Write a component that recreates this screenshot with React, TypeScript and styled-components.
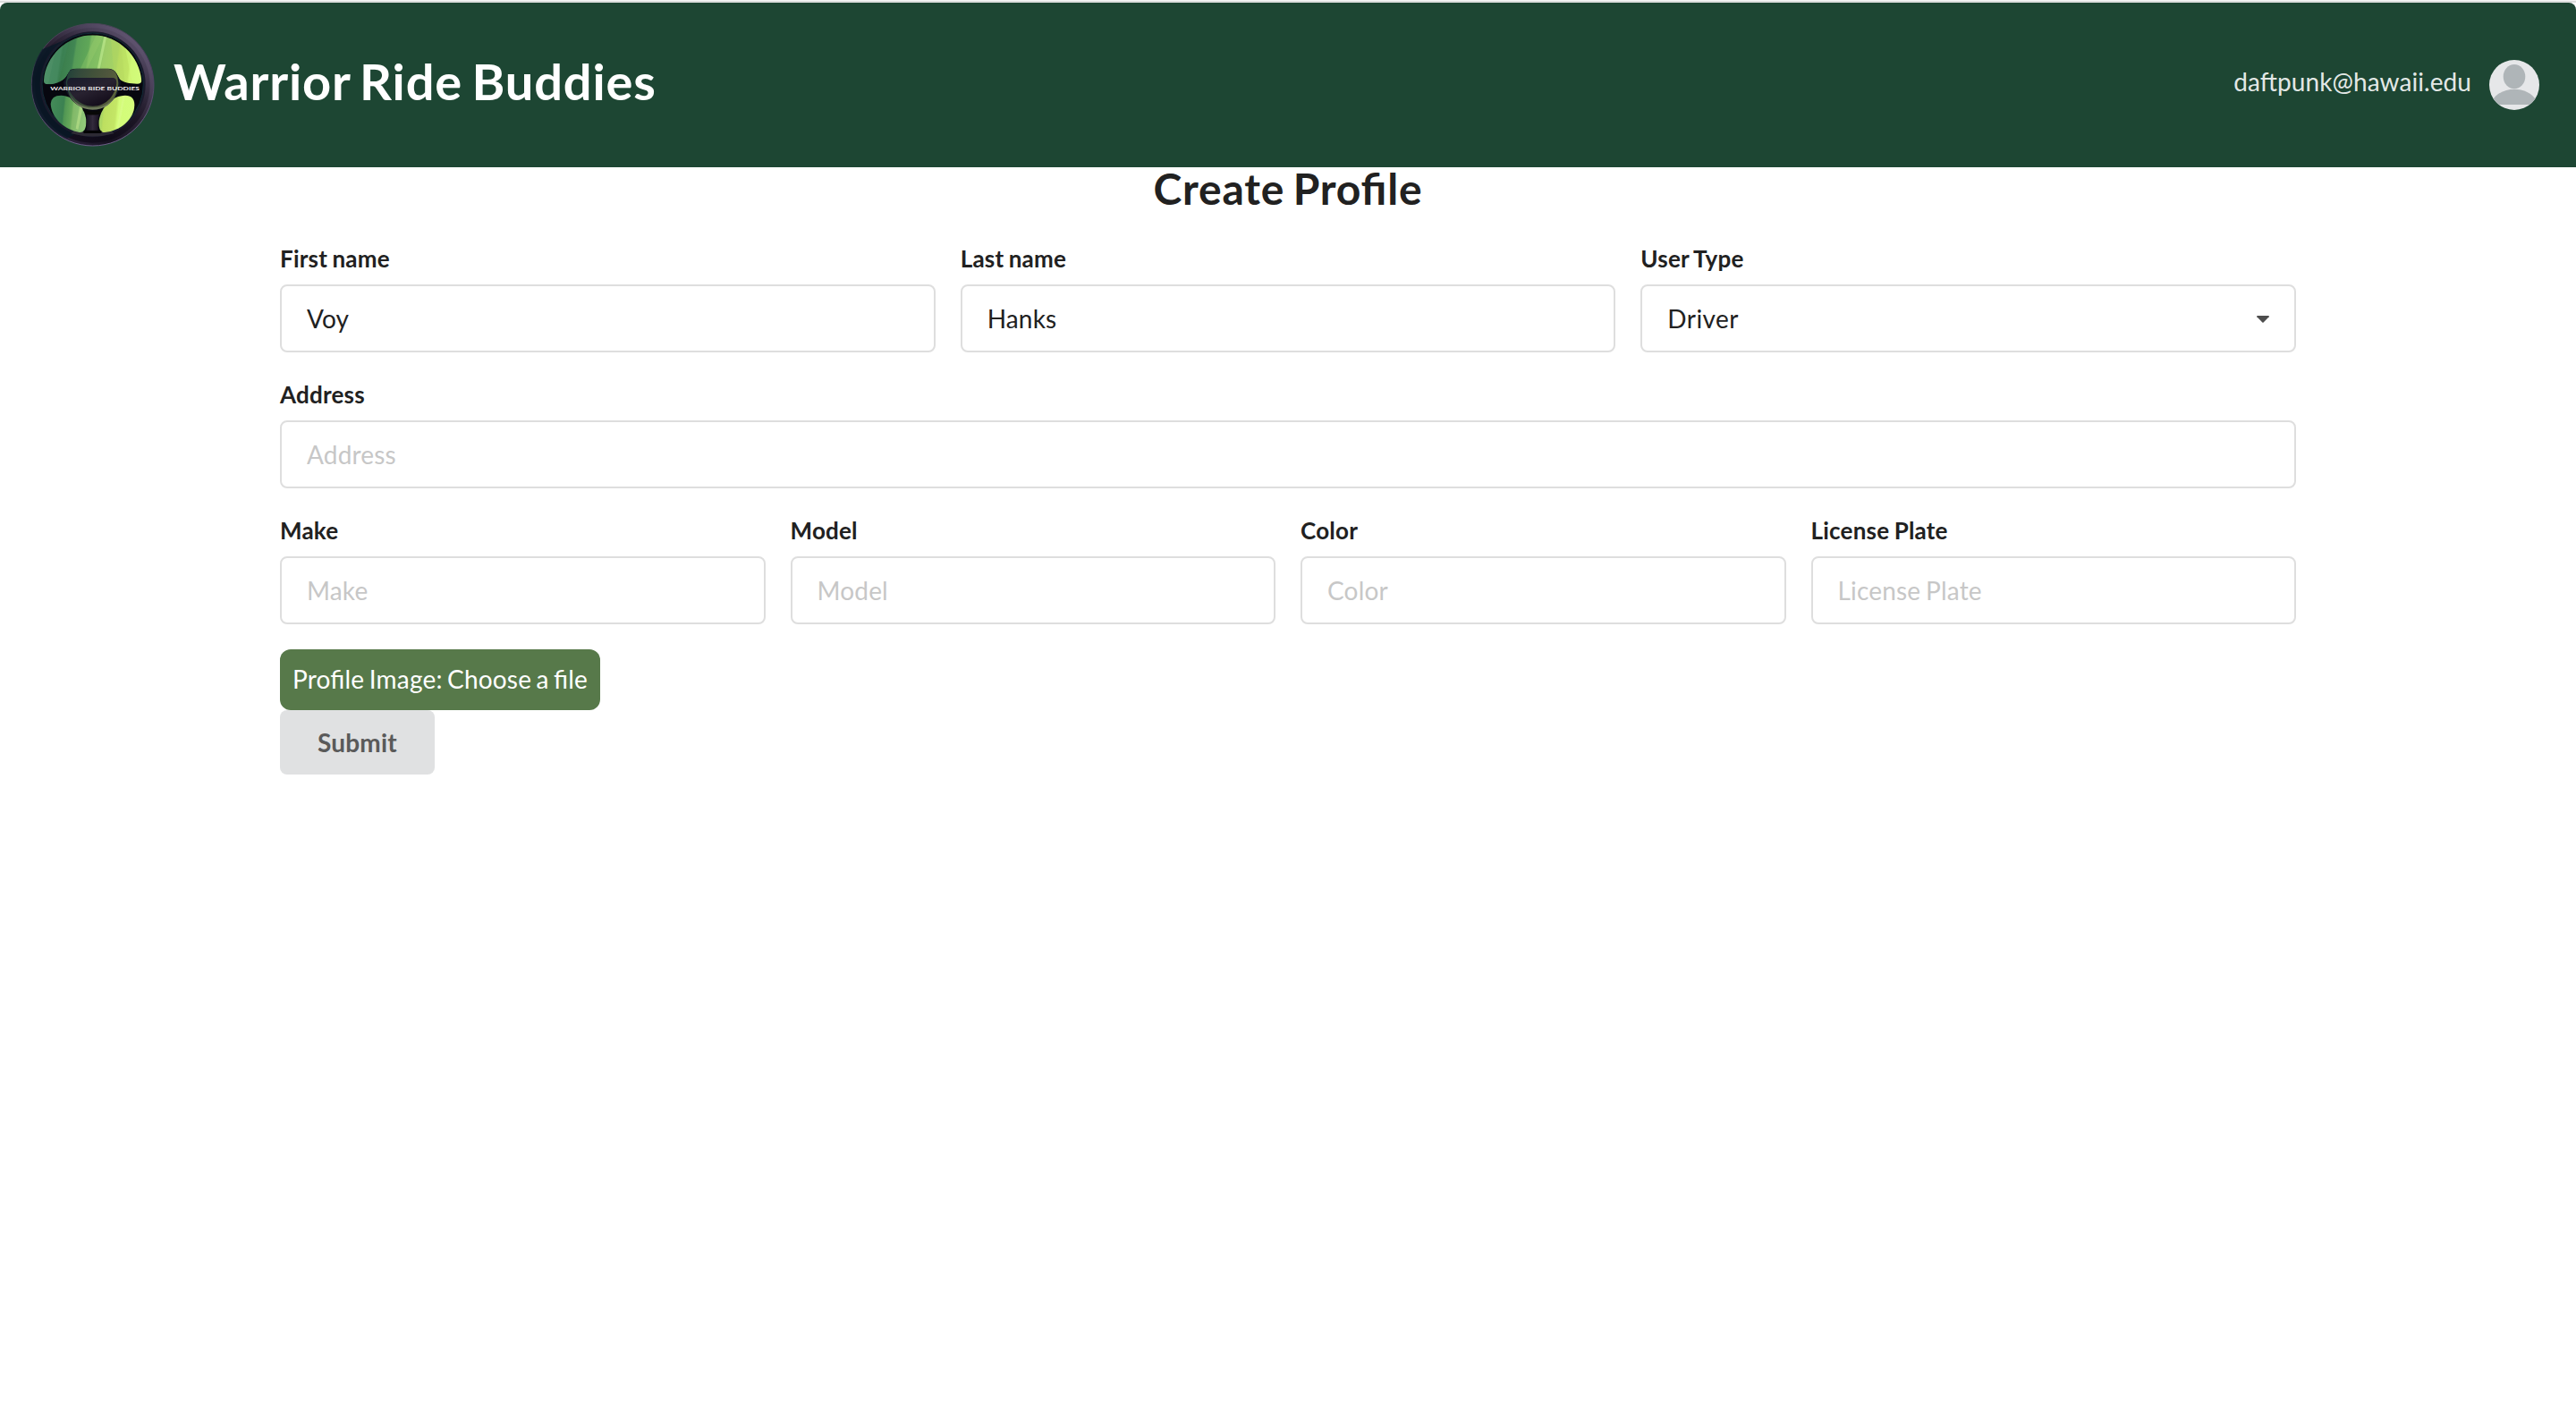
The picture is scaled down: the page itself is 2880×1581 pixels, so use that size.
import React from 'react';
import styled, { createGlobalStyle } from 'styled-components';

const GlobalStyle = createGlobalStyle`
  *, *::before, *::after { box-sizing: border-box; }
  html { font-size: 28px; }
  body {
    margin: 0;
    background: #fff;
    color: #212121;
    font-family: Lato, 'Liberation Sans', sans-serif;
    font-size: 28px;
    line-height: 40px;
    letter-spacing: 0.17px;
    word-spacing: -1.5px;
    font-feature-settings: 'liga' 1;
  }
`;

const Page = styled.div`
  min-height: 1581px;
  border-top: 1px solid #f5f5f5;
`;

const TopRule = styled.div`
  height: 2px;
  background: #dcdedd;
`;

const NavBar = styled.header`
  display: flex;
  align-items: center;
  justify-content: space-between;
  height: 184px;
  padding: 0 41px 0 20px;
  background: #1d4633;
  border-radius: 8px 8px 0 0;
`;

const Brand = styled.div`
  display: flex;
  align-items: center;
  gap: 3px;
`;

const BrandName = styled.h1`
  margin: 0 0 9px;
  color: #fff;
  font-size: 56px;
  font-weight: 700;
  line-height: 72px;
  letter-spacing: 0.85px;
  word-spacing: -4px;
`;

const Account = styled.div`
  display: flex;
  align-items: center;
  gap: 20px;
`;

const Email = styled.span`
  margin-bottom: 8px;
  color: rgba(255, 255, 255, 0.9);
  letter-spacing: 0.07px;
`;

const Container = styled.main`
  width: 2254px;
  margin: 0 auto;
`;

const PageTitle = styled.h2`
  margin: -7px 0 28px;
  font-size: 48px;
  font-weight: 700;
  line-height: 62px;
  letter-spacing: 0.8px;
  word-spacing: -3px;
  text-align: center;
`;

const Form = styled.form`
  display: flex;
  flex-direction: column;
  align-items: flex-start;
`;

const FieldRow = styled.div<{ $columns: number }>`
  display: grid;
  grid-template-columns: repeat(${p => p.$columns}, 1fr);
  gap: 28px;
  width: 100%;
  margin-bottom: 28px;
`;

const Field = styled.div`
  display: flex;
  flex-direction: column;
  gap: 10px;
  min-width: 0;
`;

const Label = styled.label`
  font-size: 26px;
  font-weight: 700;
  line-height: 38px;
  letter-spacing: 0.22px;
  word-spacing: -1.2px;
`;

const Input = styled.input`
  width: 100%;
  height: 76px;
  padding: 19px 28px;
  border: 2px solid #dedede;
  border-radius: 8px;
  background: #fff;
  color: #212121;
  font: inherit;
  font-feature-settings: inherit;
  letter-spacing: inherit;
  word-spacing: inherit;
  line-height: 34px;
  outline: none;

  &::placeholder {
    color: #c7c7c7;
    opacity: 1;
  }
`;

const Dropdown = styled.div`
  display: flex;
  align-items: center;
  justify-content: space-between;
  height: 76px;
  padding: 0 28px;
  border: 2px solid #dedede;
  border-radius: 8px;
  background: #fff;
  line-height: 34px;
  letter-spacing: 0.45px;

  svg {
    margin-top: 2px;
  }
`;

const UploadButton = styled.label`
  padding: 13px 14px 15px;
  border-radius: 12px;
  background: #57794a;
  color: #fff;
  line-height: 40px;
  letter-spacing: 0.2px;
  word-spacing: -2px;
`;

const SubmitButton = styled.button`
  height: 72px;
  padding: 0 42px;
  border: 0;
  border-radius: 8px;
  background: #e0e1e2;
  color: #5a5a5a;
  font: inherit;
  font-weight: 700;
  line-height: 28px;
  letter-spacing: inherit;
`;

const Caret = () => (
  <svg width="14" height="8" viewBox="0 0 14 8">
    <path d="M0.3 0H13.7V1.2L7.6 7.6Q7 8.1 6.4 7.6L0.3 1.2z" fill="#4d4d4d" />
  </svg>
);

const Avatar = () => (
  <svg width="56" height="56" viewBox="0 0 56 56">
    <defs>
      <clipPath id="avatarClip">
        <circle cx="28" cy="28" r="28" />
      </clipPath>
    </defs>
    <g clipPath="url(#avatarClip)">
      <rect width="56" height="56" fill="#e6e7e9" />
      <ellipse cx="28" cy="18.7" rx="12.3" ry="13.6" fill="#afb5b8" />
      <path d="M3 50V46C8 37 18 32.8 28 32.8S48 37 53 46V50z" fill="#afb5b8" />
    </g>
  </svg>
);

const Logo = () => (
  <svg width="171" height="170" viewBox="0 0 513 510">
    <defs>
      <linearGradient id="rim" x1="0.85" y1="0.1" x2="0.2" y2="0.85">
        <stop offset="0" stopColor="#625672" />
        <stop offset="0.25" stopColor="#494058" />
        <stop offset="0.5" stopColor="#2c2335" />
        <stop offset="0.8" stopColor="#15101f" />
        <stop offset="1" stopColor="#2a2038" />
      </linearGradient>
      <linearGradient id="rimEdge" x1="0" y1="0" x2="0.2" y2="1">
        <stop offset="0" stopColor="#4c4659" />
        <stop offset="0.5" stopColor="#453b59" />
        <stop offset="1" stopColor="#6d5c87" />
      </linearGradient>
      <linearGradient id="rimShade" x1="0.9" y1="0.2" x2="0.5" y2="1">
        <stop offset="0" stopColor="#0d0916" stopOpacity="0.1" />
        <stop offset="0.5" stopColor="#0d0916" stopOpacity="0.4" />
        <stop offset="1" stopColor="#0d0916" stopOpacity="0.75" />
      </linearGradient>
      <linearGradient id="glass" gradientUnits="userSpaceOnUse" x1="85" y1="240" x2="415" y2="290">
        <stop offset="0" stopColor="#4e9068" />
        <stop offset="0.13" stopColor="#4a8c61" />
        <stop offset="0.15" stopColor="#3a7d4c" />
        <stop offset="0.26" stopColor="#418653" />
        <stop offset="0.28" stopColor="#559b57" />
        <stop offset="0.4" stopColor="#60a758" />
        <stop offset="0.42" stopColor="#7bb962" />
        <stop offset="0.54" stopColor="#86c263" />
        <stop offset="0.56" stopColor="#9bcc68" />
        <stop offset="0.7" stopColor="#a6d364" />
        <stop offset="0.72" stopColor="#b9df62" />
        <stop offset="0.83" stopColor="#c1e565" />
        <stop offset="0.85" stopColor="#cff573" />
        <stop offset="1" stopColor="#d6ff80" />
      </linearGradient>
      <linearGradient id="glassLow" gradientUnits="userSpaceOnUse" x1="108" y1="340" x2="395" y2="370">
        <stop offset="0" stopColor="#448b59" />
        <stop offset="0.15" stopColor="#3b8151" />
        <stop offset="0.17" stopColor="#519653" />
        <stop offset="0.25" stopColor="#68aa5a" />
        <stop offset="0.27" stopColor="#82b968" />
        <stop offset="0.42" stopColor="#92c97b" />
        <stop offset="0.56" stopColor="#a7d568" />
        <stop offset="0.61" stopColor="#add762" />
        <stop offset="0.63" stopColor="#bddf60" />
        <stop offset="0.76" stopColor="#c4e666" />
        <stop offset="0.79" stopColor="#d3fc78" />
        <stop offset="1" stopColor="#d4fd7d" />
      </linearGradient>
      <linearGradient id="hubRim" x1="0" y1="0" x2="1" y2="0.2">
        <stop offset="0" stopColor="#1f4039" />
        <stop offset="0.25" stopColor="#33493b" />
        <stop offset="0.55" stopColor="#43523a" />
        <stop offset="0.8" stopColor="#4f563d" />
        <stop offset="1" stopColor="#59633a" />
      </linearGradient>
      <linearGradient id="hub" x1="0" y1="0" x2="0.7" y2="1">
        <stop offset="0" stopColor="#171c2b" />
        <stop offset="0.5" stopColor="#282230" />
        <stop offset="1" stopColor="#120b19" />
      </linearGradient>
      <linearGradient id="stem" x1="0" y1="0" x2="1" y2="0">
        <stop offset="0" stopColor="#171322" />
        <stop offset="0.5" stopColor="#332b3c" />
        <stop offset="1" stopColor="#171020" />
      </linearGradient>
      <clipPath id="topGlass">
        <path d="M87 240C92 160 164 88 251 88C336 88 408 157 415 240Q415 251 400 251C374 251 354 247 341 235L330 215Q320 202 302 202H195Q176 202 167 219C157 240 130 253 101 253Q86 253 87 240z" />
      </clipPath>
    </defs>
    <circle cx="251" cy="254" r="205" fill="url(#rim)" stroke="url(#rimEdge)" strokeWidth="3" />
    <circle cx="250" cy="256" r="193" fill="url(#rimShade)" />
    <path d="M82 135L156 105C102 145 84 195 84 252C84 330 130 390 190 421L165 434C93 401 54 342 48 270C45 218 57 168 82 135z" fill="#071a27" opacity="0.75" />
    <ellipse cx="251" cy="253" rx="177" ry="177" fill="#1a1a2b" />
    <ellipse cx="251" cy="252" rx="170" ry="171" fill="#07070f" stroke="#102a36" strokeWidth="3" />
    <path d="M190 407Q250 420 312 407L323 418Q252 437 178 418z" fill="#2d2a34" />
    <g clipPath="url(#topGlass)">
      <rect x="80" y="80" width="345" height="180" fill="url(#glass)" />
      <path d="M179 80L134 253H102L139 80z" fill="#3e845a" opacity="0.45" />
      <path d="M292 80L232 202H209L266 80z" fill="#9fd16d" opacity="0.3" />
      <path d="M299 86L275 202H266L290 86z" fill="#c3ed91" opacity="0.65" />
      <path d="M344 90L359 253H326L310 80z" fill="#b5d75f" opacity="0.45" />
      <path d="M376 112L412 240H382L354 100z" fill="#d2fb7a" opacity="0.5" />
    </g>
    <path d="M110 318Q112 290 145 290C188 292 222 325 229 371Q231 414 207 414C156 405 112 366 110 318z" fill="url(#glassLow)" />
    <path d="M391 322Q391 290 360 290C316 291 281 326 272 374Q269 414 291 414C342 410 391 371 391 322z" fill="url(#glassLow)" />
    <path d="M219 325L202 405L194 401L209 317zM352 291L331 403L338 401L360 291z" fill="#e0fd9c" opacity="0.35" />
    <path d="M176 204Q184 200 198 200H302Q321 200 330 215L345 242C343 290 302 337 250 338C202 337 159 295 153 245z" fill="#111424" />
    <path d="M193 201H304Q328 202 334 229L337 248C337 293 300 335 251 335C203 334 163 291 161 247L166 224Q171 201 193 201z" fill="url(#hubRim)" />
    <path d="M180 231H320Q331 232 331 248C327 287 299 326 251 326C205 326 170 286 165 248Q165 231 180 231z" fill="url(#hub)" />
    <path d="M168 278C186 314 214 331 251 331C291 331 318 311 333 278C318 319 289 338 250 338C211 337 182 314 168 278z" fill="#6f7a5b" />
    <path d="M231 353H272L269 378V407H230V378z" fill="url(#stem)" />
    <path d="M217 338Q250 350 284 338L273 353Q249 358 230 353z" fill="#080807" />
    <path d="M222 408H280V417H220z" fill="#030305" />
    <text
      x="109"
      y="273"
      fill="#ece9eb"
      fontFamily="Lato, sans-serif"
      fontSize="18"
      fontWeight="700"
      letterSpacing="0"
      wordSpacing="0"
      textLength="299"
      lengthAdjust="spacingAndGlyphs"
    >
      WARRIOR RIDE BUDDIES
    </text>
  </svg>
);

type TextFieldProps = { id: string; label: string; value?: string };

const TextField = ({ id, label, value }: TextFieldProps) => (
  <Field>
    <Label htmlFor={id}>{label}</Label>
    <Input id={id} placeholder={label} defaultValue={value} />
  </Field>
);

export default function App() {
  return (
    <Page>
      <GlobalStyle />
      <TopRule />
      <NavBar>
        <Brand>
          <Logo />
          <BrandName>Warrior Ride Buddies</BrandName>
        </Brand>
        <Account>
          <Email>daftpunk@hawaii.edu</Email>
          <Avatar />
        </Account>
      </NavBar>
      <Container>
        <PageTitle>Create Profile</PageTitle>
        <Form>
          <FieldRow $columns={3}>
            <TextField id="firstName" label="First name" value="Voy" />
            <TextField id="lastName" label="Last name" value="Hanks" />
            <Field>
              <Label>User Type</Label>
              <Dropdown>
                Driver
                <Caret />
              </Dropdown>
            </Field>
          </FieldRow>
          <FieldRow $columns={1}>
            <TextField id="address" label="Address" />
          </FieldRow>
          <FieldRow $columns={4}>
            <TextField id="make" label="Make" />
            <TextField id="model" label="Model" />
            <TextField id="color" label="Color" />
            <TextField id="plate" label="License Plate" />
          </FieldRow>
          <UploadButton>Profile Image: Choose a file</UploadButton>
          <SubmitButton type="button">Submit</SubmitButton>
        </Form>
      </Container>
    </Page>
  );
}
